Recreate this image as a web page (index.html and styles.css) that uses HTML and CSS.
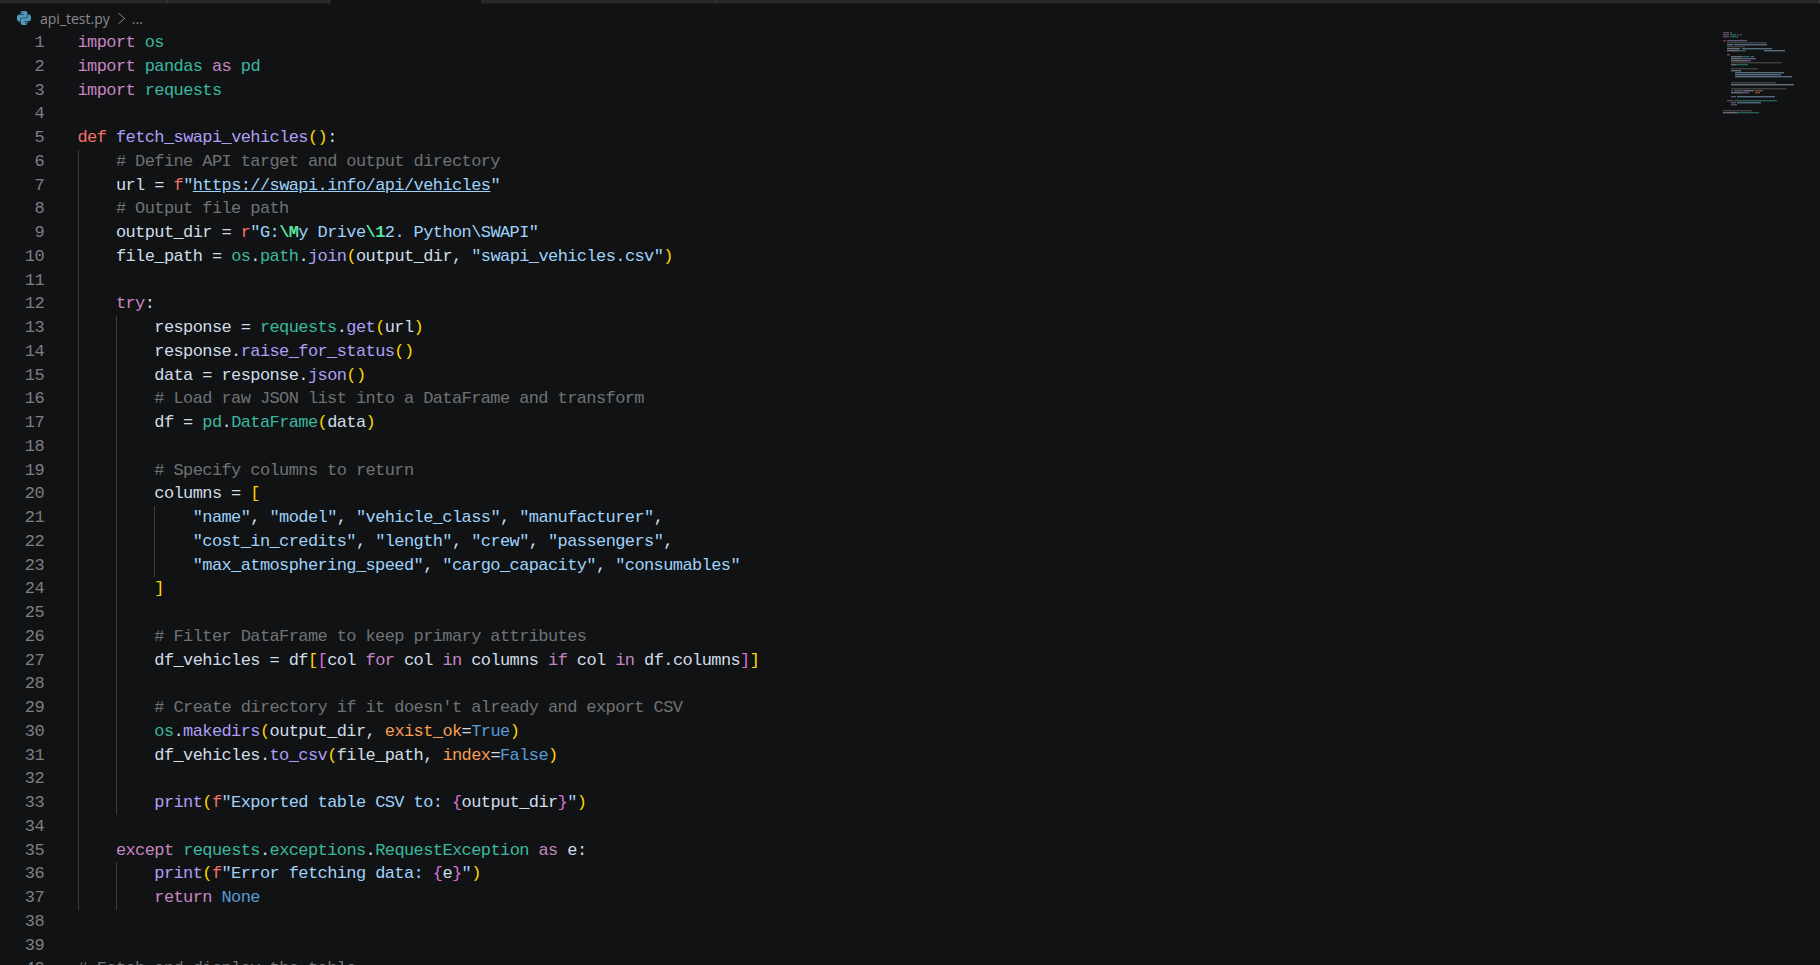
FILE: index.html
```html
<!DOCTYPE html>
<html lang="en">
<head>
    <meta charset="UTF-8">
    <title>api_test.py</title>
    <link rel="stylesheet" href="styles.css">
</head>
<body>
    <div class="tabs">
        <div class="tab tab-a"></div>
        <div class="tab tab-b"></div>
        <div class="tab-active"></div>
        <div class="tab tab-c"></div>
        <div class="tab tab-rest"></div>
    </div>

    <div class="crumbs">
        <svg class="py-icon" viewBox="0 0 24 24"><path d="M14.25.18l.9.2.73.26.59.3.45.32.34.34.25.34.16.33.1.3.04.26.02.2-.01.13V8.5l-.05.63-.13.55-.21.46-.26.38-.3.31-.33.25-.35.19-.35.14-.33.1-.3.07-.26.04-.21.02H8.77l-.69.05-.59.14-.5.22-.41.27-.33.32-.27.35-.2.36-.15.37-.1.35-.07.32-.04.27-.02.21v3.06H3.17l-.21-.03-.28-.07-.32-.12-.35-.18-.36-.26-.36-.36-.35-.46-.32-.59-.28-.73-.21-.88-.14-1.05-.05-1.23.06-1.22.16-1.04.24-.87.32-.71.36-.57.4-.44.42-.33.42-.24.4-.16.36-.1.32-.05.24-.01h.16l.06.01h8.16v-.83H6.18l-.01-2.75-.02-.37.05-.34.11-.31.17-.28.25-.26.31-.23.38-.2.44-.18.51-.15.58-.12.64-.1.71-.06.77-.04.84-.02 1.27.05zm-6.3 1.98l-.23.33-.08.41.08.41.23.34.33.22.41.09.41-.09.33-.22.23-.34.08-.41-.08-.41-.23-.33-.33-.22-.41-.09-.41.09zm13.09 3.95l.28.06.32.12.35.18.36.27.36.35.35.47.32.59.28.73.21.88.14 1.04.05 1.23-.06 1.23-.16 1.04-.24.86-.32.71-.36.57-.4.45-.42.33-.42.24-.4.16-.36.09-.32.05-.24.02-.16-.01h-8.22v.82h5.84l.01 2.76.02.36-.05.34-.11.31-.17.29-.25.25-.31.24-.38.2-.44.17-.51.15-.58.13-.64.09-.71.07-.77.04-.84.01-1.27-.04-1.07-.14-.9-.2-.73-.25-.59-.3-.45-.33-.34-.34-.25-.34-.16-.33-.1-.3-.04-.25-.02-.2.01-.13v-5.34l.05-.64.13-.54.21-.46.26-.38.3-.32.33-.24.35-.2.35-.14.33-.1.3-.06.26-.04.21-.02.13-.01h5.84l.69-.05.59-.14.5-.21.41-.28.33-.32.27-.35.2-.36.15-.36.1-.35.07-.32.04-.28.02-.21V6.07h2.09l.14.01zm-6.47 14.25l-.23.33-.08.41.08.41.23.33.33.23.41.08.41-.08.33-.23.23-.33.08-.41-.08-.41-.23-.33-.33-.23-.41-.08-.41.08z"/></svg>
        <span class="crumb">api_test.py</span>
        <svg class="chev" viewBox="0 0 10 14"><path d="M1.5 1 L8.5 7 L1.5 13"/></svg>
        <span class="crumb">...</span>
    </div>

    <div class="editor">
        <div class="line"><span class="num">1</span><span class="code"><span class="k">import</span> <span class="m">os</span></span></div>
        <div class="line"><span class="num">2</span><span class="code"><span class="k">import</span> <span class="m">pandas</span> <span class="k">as</span> <span class="m">pd</span></span></div>
        <div class="line"><span class="num">3</span><span class="code"><span class="k">import</span> <span class="m">requests</span></span></div>
        <div class="line"><span class="num">4</span><span class="code"></span></div>
        <div class="line"><span class="num">5</span><span class="code"><span class="d">def</span> <span class="f">fetch_swapi_vehicles</span><span class="y">()</span>:</span></div>
        <div class="line"><span class="num">6</span><span class="code"><span class="ind"></span><span class="c"># Define API target and output directory</span></span></div>
        <div class="line"><span class="num">7</span><span class="code"><span class="ind"></span>url = <span class="d">f</span><span class="s">"<span class="link">https://swapi.info/api/vehicles</span>"</span></span></div>
        <div class="line"><span class="num">8</span><span class="code"><span class="ind"></span><span class="c"># Output file path</span></span></div>
        <div class="line"><span class="num">9</span><span class="code"><span class="ind"></span>output_dir = <span class="d">r</span><span class="s">"G:<span class="e">\M</span>y Drive<span class="e">\1</span>2. Python\SWAPI"</span></span></div>
        <div class="line"><span class="num">10</span><span class="code"><span class="ind"></span>file_path = <span class="m">os</span>.<span class="m">path</span>.<span class="f">join</span><span class="y">(</span>output_dir, <span class="s">"swapi_vehicles.csv"</span><span class="y">)</span></span></div>
        <div class="line"><span class="num">11</span><span class="code"><span class="ind"></span></span></div>
        <div class="line"><span class="num">12</span><span class="code"><span class="ind"></span><span class="k">try</span>:</span></div>
        <div class="line"><span class="num">13</span><span class="code"><span class="ind"></span><span class="ind"></span>response = <span class="m">requests</span>.<span class="f">get</span><span class="y">(</span>url<span class="y">)</span></span></div>
        <div class="line"><span class="num">14</span><span class="code"><span class="ind"></span><span class="ind"></span>response.<span class="f">raise_for_status</span><span class="y">()</span></span></div>
        <div class="line"><span class="num">15</span><span class="code"><span class="ind"></span><span class="ind"></span>data = response.<span class="f">json</span><span class="y">()</span></span></div>
        <div class="line"><span class="num">16</span><span class="code"><span class="ind"></span><span class="ind"></span><span class="c"># Load raw JSON list into a DataFrame and transform</span></span></div>
        <div class="line"><span class="num">17</span><span class="code"><span class="ind"></span><span class="ind"></span>df = <span class="m">pd</span>.<span class="m">DataFrame</span><span class="y">(</span>data<span class="y">)</span></span></div>
        <div class="line"><span class="num">18</span><span class="code"><span class="ind"></span><span class="ind"></span></span></div>
        <div class="line"><span class="num">19</span><span class="code"><span class="ind"></span><span class="ind"></span><span class="c"># Specify columns to return</span></span></div>
        <div class="line"><span class="num">20</span><span class="code"><span class="ind"></span><span class="ind"></span>columns = <span class="y">[</span></span></div>
        <div class="line"><span class="num">21</span><span class="code"><span class="ind"></span><span class="ind"></span><span class="ind"></span><span class="s">"name"</span>, <span class="s">"model"</span>, <span class="s">"vehicle_class"</span>, <span class="s">"manufacturer"</span>,</span></div>
        <div class="line"><span class="num">22</span><span class="code"><span class="ind"></span><span class="ind"></span><span class="ind"></span><span class="s">"cost_in_credits"</span>, <span class="s">"length"</span>, <span class="s">"crew"</span>, <span class="s">"passengers"</span>,</span></div>
        <div class="line"><span class="num">23</span><span class="code"><span class="ind"></span><span class="ind"></span><span class="ind"></span><span class="s">"max_atmosphering_speed"</span>, <span class="s">"cargo_capacity"</span>, <span class="s">"consumables"</span></span></div>
        <div class="line"><span class="num">24</span><span class="code"><span class="ind"></span><span class="ind"></span><span class="y">]</span></span></div>
        <div class="line"><span class="num">25</span><span class="code"><span class="ind"></span><span class="ind"></span></span></div>
        <div class="line"><span class="num">26</span><span class="code"><span class="ind"></span><span class="ind"></span><span class="c"># Filter DataFrame to keep primary attributes</span></span></div>
        <div class="line"><span class="num">27</span><span class="code"><span class="ind"></span><span class="ind"></span>df_vehicles = df<span class="y">[</span><span class="v">[</span>col <span class="k">for</span> col <span class="k">in</span> columns <span class="k">if</span> col <span class="k">in</span> df.columns<span class="v">]</span><span class="y">]</span></span></div>
        <div class="line"><span class="num">28</span><span class="code"><span class="ind"></span><span class="ind"></span></span></div>
        <div class="line"><span class="num">29</span><span class="code"><span class="ind"></span><span class="ind"></span><span class="c"># Create directory if it doesn't already and export CSV</span></span></div>
        <div class="line"><span class="num">30</span><span class="code"><span class="ind"></span><span class="ind"></span><span class="m">os</span>.<span class="f">makedirs</span><span class="y">(</span>output_dir, <span class="a">exist_ok</span>=<span class="b">True</span><span class="y">)</span></span></div>
        <div class="line"><span class="num">31</span><span class="code"><span class="ind"></span><span class="ind"></span>df_vehicles.<span class="f">to_csv</span><span class="y">(</span>file_path, <span class="a">index</span>=<span class="b">False</span><span class="y">)</span></span></div>
        <div class="line"><span class="num">32</span><span class="code"><span class="ind"></span><span class="ind"></span></span></div>
        <div class="line"><span class="num">33</span><span class="code"><span class="ind"></span><span class="ind"></span><span class="f">print</span><span class="y">(</span><span class="d">f</span><span class="s">"Exported table CSV to: </span><span class="v">{</span>output_dir<span class="v">}</span><span class="s">"</span><span class="y">)</span></span></div>
        <div class="line"><span class="num">34</span><span class="code"><span class="ind"></span></span></div>
        <div class="line"><span class="num">35</span><span class="code"><span class="ind"></span><span class="k">except</span> <span class="m">requests</span>.<span class="m">exceptions</span>.<span class="m">RequestException</span> <span class="k">as</span> e:</span></div>
        <div class="line"><span class="num">36</span><span class="code"><span class="ind"></span><span class="ind"></span><span class="f">print</span><span class="y">(</span><span class="d">f</span><span class="s">"Error fetching data: </span><span class="v">{</span>e<span class="v">}</span><span class="s">"</span><span class="y">)</span></span></div>
        <div class="line"><span class="num">37</span><span class="code"><span class="ind"></span><span class="ind"></span><span class="k">return</span> <span class="b">None</span></span></div>
        <div class="line"><span class="num">38</span><span class="code"></span></div>
        <div class="line"><span class="num">39</span><span class="code"></span></div>
        <div class="line"><span class="num">40</span><span class="code"><span class="c"># Fetch and display the table</span></span></div>
    </div>

    <!-- minimap: one row of blocks per source line -->
    <svg class="minimap" width="80" height="90" viewBox="0 0 80 90">
        <g fill="#c586c0">
            <rect x="0" y="1" width="6" height="1.4"/><rect x="0" y="3" width="6" height="1.4"/><rect x="0" y="5" width="6" height="1.4"/>
            <rect x="14" y="3" width="2" height="1.4"/><rect x="4" y="23" width="3" height="1.4"/><rect x="4" y="69" width="6" height="1.4"/>
            <rect x="8" y="73" width="6" height="1.4"/>
        </g>
        <g fill="#3fc1a5">
            <rect x="7" y="1" width="2" height="1.4"/><rect x="7" y="3" width="6" height="1.4"/><rect x="17" y="3" width="2" height="1.4"/>
            <rect x="7" y="5" width="8" height="1.4"/><rect x="16" y="19" width="7" height="1.4"/><rect x="19" y="25" width="8" height="1.4"/>
            <rect x="13" y="33" width="12" height="1.4"/><rect x="8" y="59" width="2" height="1.4"/><rect x="11" y="69" width="43" height="1.4"/>
            <rect x="14" y="81" width="22" height="1.4"/>
        </g>
        <g fill="#f47067"><rect x="0" y="9" width="3" height="1.4"/></g>
        <g fill="#b9a5f5">
            <rect x="4" y="9" width="20" height="1.4"/><rect x="28" y="25" width="3" height="1.4"/><rect x="17" y="27" width="16" height="1.4"/>
            <rect x="24" y="29" width="4" height="1.4"/><rect x="11" y="59" width="8" height="1.4"/><rect x="20" y="61" width="6" height="1.4"/>
            <rect x="8" y="65" width="5" height="1.4"/><rect x="8" y="71" width="5" height="1.4"/>
        </g>
        <g fill="#777">
            <rect x="4" y="11" width="40" height="1.4"/><rect x="4" y="15" width="18" height="1.4"/><rect x="8" y="31" width="51" height="1.4"/>
            <rect x="8" y="37" width="27" height="1.4"/><rect x="8" y="51" width="45" height="1.4"/><rect x="8" y="57" width="55" height="1.4"/>
            <rect x="0" y="79" width="29" height="1.4"/>
        </g>
        <g fill="#cfdde8">
            <rect x="4" y="13" width="6" height="1.4"/><rect x="4" y="17" width="13" height="1.4"/><rect x="4" y="19" width="12" height="1.4"/>
            <rect x="8" y="25" width="11" height="1.4"/><rect x="8" y="27" width="9" height="1.4"/><rect x="8" y="29" width="16" height="1.4"/>
            <rect x="8" y="33" width="5" height="1.4"/><rect x="8" y="39" width="10" height="1.4"/><rect x="8" y="53" width="63" height="1.4"/>
            <rect x="8" y="61" width="12" height="1.4"/><rect x="0" y="81" width="14" height="1.4"/><rect x="20" y="59" width="11" height="1.4"/>
        </g>
        <g fill="#a5d6ff">
            <rect x="11" y="13" width="33" height="1.4"/><rect x="19" y="17" width="30" height="1.4"/><rect x="41" y="19" width="21" height="1.4"/>
            <rect x="12" y="41" width="49" height="1.4"/><rect x="12" y="43" width="46" height="1.4"/><rect x="12" y="45" width="57" height="1.4"/>
            <rect x="14" y="65" width="38" height="1.4"/><rect x="14" y="71" width="24" height="1.4"/>
        </g>
        <g fill="#f69d50"><rect x="32" y="59" width="8" height="1.4"/><rect x="32" y="61" width="5" height="1.4"/></g>
    </svg>
</body>
</html>
```

FILE: styles.css
```css
* {
    box-sizing: border-box;
    margin: 0;
    padding: 0;
}

html, body {
    height: 100%;
    overflow: hidden;
}

body {
    position: relative;
    background-color: #111214;
    color: #cfdde8;
}

/* Tab strip, only its bottom edge is in the shot */
.tabs {
    display: flex;
    height: 4px;
}

.tab {
    background-color: #27282a;
    border-bottom: 1px solid #1d1e20;
    border-right: 1px solid #37383a;
}

.tab-a { width: 168px; }
.tab-b { width: 162px; }
.tab-active { width: 151px; }
.tab-c { width: 235px; }
.tab-rest { flex: 1; }

.crumbs {
    display: flex;
    align-items: center;
    height: 27px;
    padding-left: 17px;
    padding-top: 1px;
    font-family: "Open Sans", sans-serif;
    font-size: 14px;
    color: #8b8b8b;
}

.py-icon {
    width: 14px;
    height: 14px;
    margin-right: 9px;
    fill: #519aba;
}

.chev {
    width: 9px;
    height: 13px;
    margin: 0 6px 0 7px;
    fill: none;
    stroke: #8b8b8b;
    stroke-width: 1.1;
}

/* Editor */
.editor {
    font-family: "Liberation Mono", monospace;
    font-size: 17px;
    letter-spacing: -0.6px;
}

.line {
    display: flex;
    height: 23.75px;
    line-height: 23.75px;
}

.num {
    width: 44px;
    margin-right: 33.5px;
    text-align: right;
    color: #7c7f83;
}

.code {
    display: block;
    white-space: pre;
}

.ind {
    display: inline-block;
    vertical-align: top;
    width: 38.4px;
    height: 23.75px;
    border-left: 1px solid #3c3d3f;
}

.k { color: #c586c0; }
.m { color: #3ab89e; }
.d { color: #f47067; }
.f { color: #ad9ff5; }
.c { color: #6e7275; }
.s { color: #9fd2fa; }
.e { color: #56e39f; font-weight: bold; }
.y { color: #ffd700; }
.v { color: #da70d6; }
.a { color: #f69d50; }
.b { color: #569cd6; }

.link { text-decoration: underline; }

.minimap {
    position: absolute;
    top: 31px;
    left: 1723px;
    opacity: 0.45;
    filter: blur(0.4px);
}
```
